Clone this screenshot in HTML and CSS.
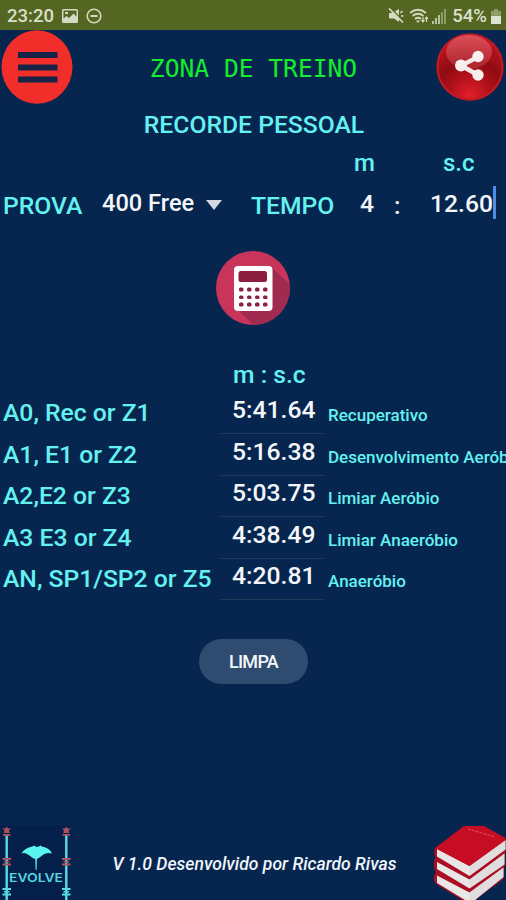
FILE: index.html
```html
<!DOCTYPE html>
<html lang="pt">
<head>
  <meta charset="UTF-8">
  <meta name="viewport" content="width=device-width, initial-scale=1.0">
  <title>Zona de Treino</title>
  <link rel="stylesheet" href="styles.css">
</head>
<body>
  <div class="status-bar">
    <span class="clock">23:20</span>
    <svg class="icon-picture" width="16" height="14" viewBox="0 0 16 14">
      <path fill="#d3dcc2" fill-rule="evenodd" d="M1.500 0h13Q16 0 16 1.500v11Q16 14 14.500 14h-13Q0 14 0 12.500v-11Q0 0 1.500 0zM1.500 1.500v8l3-2.500 2.500 2 4.500-4.500 3 3v-6zM3 3h3v2H3z"/>
    </svg>
    <svg class="icon-dnd" width="16" height="16" viewBox="0 0 16 16" fill="none" stroke="#d3dcc2" stroke-width="1.600">
      <circle cx="8" cy="8" r="6.800"/>
      <path d="M4.500 8h7" stroke-width="2"/>
    </svg>
    <svg class="icon-mute" width="16" height="16" viewBox="0 0 16 16">
      <path fill="#d3dcc2" d="M1 5h3l7-4v13l-5-3.500H1z"/>
      <path d="M2.500 0l13 13" stroke="#556522" stroke-width="1.500"/>
      <path d="M1 .5l14 14M12.500 5l2-2M13 8h2.500" stroke="#d3dcc2" stroke-width="1.700"/>
    </svg>
    <svg class="icon-wifi" width="20" height="16" viewBox="0 0 20 16" fill="none" stroke="#d3dcc2" stroke-width="1.700">
      <path d="M1 5q8-6.500 16 0M3.500 8q5.500-4.500 11 0M6 11q3-2.500 6 0"/>
      <path d="M7 12.500h4l-2 2.500z" fill="#d3dcc2" stroke="none"/>
      <path d="M14 9v5M17.500 9v5M12.500 12l1.500 2 1.500-2M16 11l1.500-2 1.500 2" stroke-width="1.200"/>
    </svg>
    <svg class="icon-signal" width="15" height="15" viewBox="0 0 15 15">
      <path fill="#b8c4a0" d="M0 12h2v3H0zM3 9h2v6H3zM6 6h2v9H6z"/>
      <path fill="#8d9d68" d="M9 3h2v12H9zM12 0h2v15h-2z"/>
    </svg>
    <span class="battery-level">54%</span>
    <svg class="icon-battery" width="10" height="15" viewBox="0 0 10 15">
      <path fill="#8d9d68" d="M3 0h4v2h3v6H0V2h3z"/>
      <path fill="#dbe2cd" d="M0 7h10v8H0z"/>
    </svg>
  </div>

  <header class="header">
    <svg class="menu-button" width="72" height="74" viewBox="0 0 72 74">
      <ellipse cx="36" cy="37" rx="35.500" ry="36.800" fill="#f12e29"/>
      <path fill="#172447" d="M17 22h39.500v6H17zM17 34.500h39.500v6H17zM17 46.500h39.500v6H17z"/>
    </svg>
    <h1>ZONA DE TREINO</h1>
    <svg class="share-button" width="68" height="70" viewBox="0 0 68 70">
      <defs>
        <radialGradient id="ball" cx="50%" cy="92%" r="85%">
          <stop offset="0" stop-color="#e3202b"/>
          <stop offset=".35" stop-color="#b01019"/>
          <stop offset=".6" stop-color="#8f0c13"/>
          <stop offset="1" stop-color="#c21420"/>
        </radialGradient>
        <linearGradient id="shine" x1="0" y1="0" x2="0" y2="1">
          <stop offset="0" stop-color="#e0626a" stop-opacity=".75"/>
          <stop offset="1" stop-color="#d04c53" stop-opacity=".4"/>
        </linearGradient>
      </defs>
      <circle cx="34" cy="35" r="33.500" fill="url(#ball)"/>
      <circle cx="34" cy="35" r="32.500" fill="none" stroke="#c01a25" stroke-width="2"/>
      <ellipse cx="33" cy="20" rx="23" ry="17" fill="url(#shine)"/>
      <path d="M42 25L25 33.500l17 9.500" fill="none" stroke="#f5e9e8" stroke-width="4.500"/>
      <g fill="#f8efee">
        <circle cx="25" cy="33.500" r="6"/>
        <circle cx="42" cy="24.500" r="5.700"/>
        <circle cx="42" cy="43" r="5.700"/>
      </g>
    </svg>
  </header>

  <section class="record">
    <h2>RECORDE PESSOAL</h2>
    <div class="units">
      <span class="unit-min">m</span>
      <span class="unit-sec">s.c</span>
    </div>
    <div class="event">
      <span class="label prova">PROVA</span>
      <span class="value select">400 Free</span>
      <span class="arrow"></span>
      <span class="label tempo">TEMPO</span>
      <span class="value minutes">4</span>
      <span class="value colon">:</span>
      <span class="value seconds">12.60</span>
      <span class="caret"></span>
    </div>
  </section>

  <div class="calculate">
    <svg width="74" height="74" viewBox="0 0 74 74">
      <clipPath id="disc"><circle cx="37" cy="37" r="37"/></clipPath>
      <circle cx="37" cy="37" r="37" fill="#c8345a"/>
      <path clip-path="url(#disc)" fill="#9f2c50" d="M54 15l24 22v40H40L20 57z"/>
      <rect x="18" y="15" width="38.500" height="45" rx="4" fill="#fff"/>
      <rect x="22.500" y="20" width="28.500" height="11" rx="2.500" fill="#8c1e40"/>
      <g fill="#8c1e40">
        <rect x="23" y="36.500" width="4.500" height="4" rx="1.500"/><rect x="31" y="36.500" width="4.500" height="4" rx="1.500"/><rect x="39" y="36.500" width="4.500" height="4" rx="1.500"/><rect x="47" y="36.500" width="4.500" height="4" rx="1.500"/>
        <rect x="23" y="44.500" width="4.500" height="3.500" rx="1.500"/><rect x="31" y="44.500" width="4.500" height="3.500" rx="1.500"/><rect x="39" y="44.500" width="4.500" height="3.500" rx="1.500"/><rect x="47" y="44.500" width="4.500" height="3.500" rx="1.500"/>
        <rect x="23" y="51.500" width="4.500" height="4" rx="1.500"/><rect x="31" y="51.500" width="4.500" height="4" rx="1.500"/><rect x="39" y="51.500" width="4.500" height="4" rx="1.500"/><rect x="47" y="51.500" width="4.500" height="4" rx="1.500"/>
      </g>
    </svg>
  </div>

  <section class="zones">
    <div class="zones-head">m : s.c</div>
    <div class="zone">
      <span class="zone-name">A0, Rec or Z1</span>
      <span class="zone-time">5:41.64</span>
      <span class="zone-desc">Recuperativo</span>
    </div>
    <div class="zone">
      <span class="zone-name">A1, E1 or Z2</span>
      <span class="zone-time">5:16.38</span>
      <span class="zone-desc">Desenvolvimento Aeróbio</span>
    </div>
    <div class="zone">
      <span class="zone-name">A2,E2 or Z3</span>
      <span class="zone-time">5:03.75</span>
      <span class="zone-desc">Limiar Aeróbio</span>
    </div>
    <div class="zone">
      <span class="zone-name">A3 E3 or Z4</span>
      <span class="zone-time">4:38.49</span>
      <span class="zone-desc">Limiar Anaeróbio</span>
    </div>
    <div class="zone">
      <span class="zone-name">AN, SP1/SP2 or Z5</span>
      <span class="zone-time">4:20.81</span>
      <span class="zone-desc">Anaeróbio</span>
    </div>
  </section>

  <button class="clear-button">LIMPA</button>

  <footer class="footer">
    <svg class="logo" width="74" height="75" viewBox="0 0 74 75">
      <rect width="70" height="75" fill="#04204a"/>
      <path d="M6.700 10v65M66.300 10v65" stroke="#57dce4" stroke-width="2.400"/>
      <g fill="#a9525c">
        <path d="M6.700 1.500l1.300 2h3l-2 2 .7 2.500H3.700l.7-2.500-2-2h3zM3 9h7.500v1.800H3zM66.300 1.500l1.300 2h3l-2 2 .7 2.500h-6l.7-2.500-2-2h3zM62.500 9H70v1.800h-7.500z"/>
        <path d="M2.500 33h8.500v2H2.500zM4 36h5.500v1.500H4zM2.500 38.500h8.500v2H2.500zM62 33h8.500v2H62zM63.500 36H69v1.500h-5.500zM62 38.500h8.500v2H62z"/>
      </g>
      <path fill="#57dce4" d="M2.500 63h8.500v2H2.500zM4 66h5.500v1.500H4zM2.500 68.500h8.500v2H2.500zM62 63h8.500v2H62zM63.500 66H69v1.500h-5.500zM62 68.500h8.500v2H62z"/>
      <path fill="#5af5ee" d="M21.500 28.500q3-5.500 11-7l1.500-1 1.500 1 1.700.5 1.700-.5 1.500-1 1.500 1q8 1.500 10 7-5-1.500-8.500 1-4 3.500-6.500 4.500l-.3 11h-1l-.3-11q-3-.8-6.500-4-4-3-7.300-1.500z"/>
      <text x="9" y="57" textLength="54" lengthAdjust="spacingAndGlyphs">EVOLVE</text>
    </svg>
    <p>V 1.0 Desenvolvido por Ricardo Rivas</p>
    <svg class="books" width="73" height="75" viewBox="0 0 73 75">
      <path fill="#a90e24" d="M2 23l70.500-9v13l-1 3v12l-1 2v10L42 75H29L3 59q-3-3-2-9l2-3q-3-4-2-12l2-2q-3-3-1-10z"/>
      <path fill="#e9e6e6" d="M4 24l32.500 17 36-26v9.500l-36 26.500L4 31.500zM4 37l32.500 17.500 35-26v11l-35 24L4 44zM4 50.500L36.500 67.500l34-25v9.500L42 75H32L4 58z"/>
      <path fill="#cfcbce" d="M36.500 41l36-26v9.500l-36 26.500zM36.500 54.500l35-26v11l-35 24zM36.500 67.500l34-25v9.500L42 75h-5.500z" opacity=".35"/>
      <path fill="#c60d23" d="M2 23l29-22h20l21.500 12v2l-36 26z"/>
      <path d="M35 4l27 8" fill="none" stroke="#e0505f" stroke-dasharray="3 1"/>
    </svg>
  </footer>
</body>
</html>
```
FILE: styles.css
```css
* {
  box-sizing: border-box;
}

body {
  margin: 0;
  width: 506px;
  height: 900px;
  overflow: hidden;
  display: flex;
  flex-direction: column;
  background-color: #06264f;
  font-family: Roboto, sans-serif;
  font-weight: 500;
  color: #64f2f0;
}

h1, h2, p {
  margin: 0;
}

/* Status bar */
.status-bar {
  height: 30px;
  flex-shrink: 0;
  padding: 2px 5px 0 7px;
  display: flex;
  align-items: center;
  background-color: #556522;
  color: #d9e0ca;
  font-size: 18.500px;
}

.icon-picture {
  margin-left: 8px;
}

.icon-dnd {
  margin-left: 8px;
}

.icon-mute {
  margin-left: auto;
}

.icon-wifi {
  margin-left: 5px;
}

.icon-signal {
  margin-left: 3px;
}

.battery-level {
  margin-left: 5px;
}

.icon-battery {
  margin-left: 4px;
}

/* Header */
.header {
  height: 74px;
  flex-shrink: 0;
  display: flex;
  justify-content: space-between;
  align-items: center;
  padding: 0 2px 0 1px;
}

.header h1 {
  padding: 2px 2px 0 0;
  font-family: "DejaVu Sans Mono", monospace;
  font-size: 24.600px;
  font-weight: normal;
  color: #14ee2c;
}

/* Personal record */
.record h2 {
  padding-left: 2px;
  text-align: center;
  font-size: 24.700px;
  font-weight: 500;
  line-height: 41px;
  height: 40px;
}

.units {
  height: 40px;
  display: flex;
  line-height: 38px;
  font-size: 24px;
}

.unit-min {
  width: 89px;
  margin-left: 354px;
}

.event {
  height: 42px;
  display: flex;
  align-items: center;
  font-size: 24.700px;
}

.value {
  color: #f4f6fa;
  padding-bottom: 4px;
}

.label {
  padding-top: 1px;
}

.prova {
  width: 99px;
  padding-left: 3px;
}

.select {
  width: 107px;
  padding-left: 3px;
  font-size: 23.600px;
}

.arrow {
  border: 8px solid transparent;
  border-top: 10px solid #d5d9df;
  border-bottom: 0;
}

.tempo {
  width: 109px;
  margin-left: 29px;
}

.minutes {
  width: 34px;
}

.colon {
  width: 36px;
  padding-bottom: 0;
}

.seconds {
  width: 63px;
}

.caret {
  width: 3px;
  height: 33px;
  margin-bottom: 6px;
  background-color: #4b8ee8;
}

.calculate {
  margin-top: 25px;
  height: 74px;
  display: flex;
  padding-left: 216px;
}

/* Training zones */
.zones {
  margin-top: 34px;
}

.zones-head {
  height: 33px;
  padding-left: 233px;
  font-size: 24.700px;
  line-height: 32px;
}

.zone {
  height: 41.500px;
  display: grid;
  grid-template-columns: 221px 103px 182px;
  white-space: nowrap;
}

.zone-name {
  padding-left: 3px;
  font-size: 24.700px;
  line-height: 42px;
}

.zone-time {
  border-bottom: 1px solid #263b59;
  color: #f4f6fa;
  font-size: 24.700px;
  line-height: 36px;
  padding-left: 11px;
}

.zone-desc {
  overflow: hidden;
  padding-left: 4px;
  font-size: 17px;
  line-height: 47px;
}

.clear-button {
  width: 109px;
  height: 45px;
  margin: 39px 0 0 199px;
  padding: 0;
  border: none;
  border-radius: 23px;
  background-color: #304b70;
  color: #f2f7fb;
  font-family: Roboto, sans-serif;
  font-size: 18px;
  font-weight: 500;
  letter-spacing: -0.700px;
}

/* Footer */
.footer {
  height: 75px;
  margin-top: auto;
  display: flex;
  justify-content: space-between;
  align-items: center;
  color: #f0f5fb;
}

.footer p {
  padding: 2px 0 0 2px;
  font-size: 17.600px;
  font-style: italic;
}

.logo text {
  font-family: Inter, sans-serif;
  font-size: 12px;
  font-weight: 600;
  fill: #55d5e0;
}
```
